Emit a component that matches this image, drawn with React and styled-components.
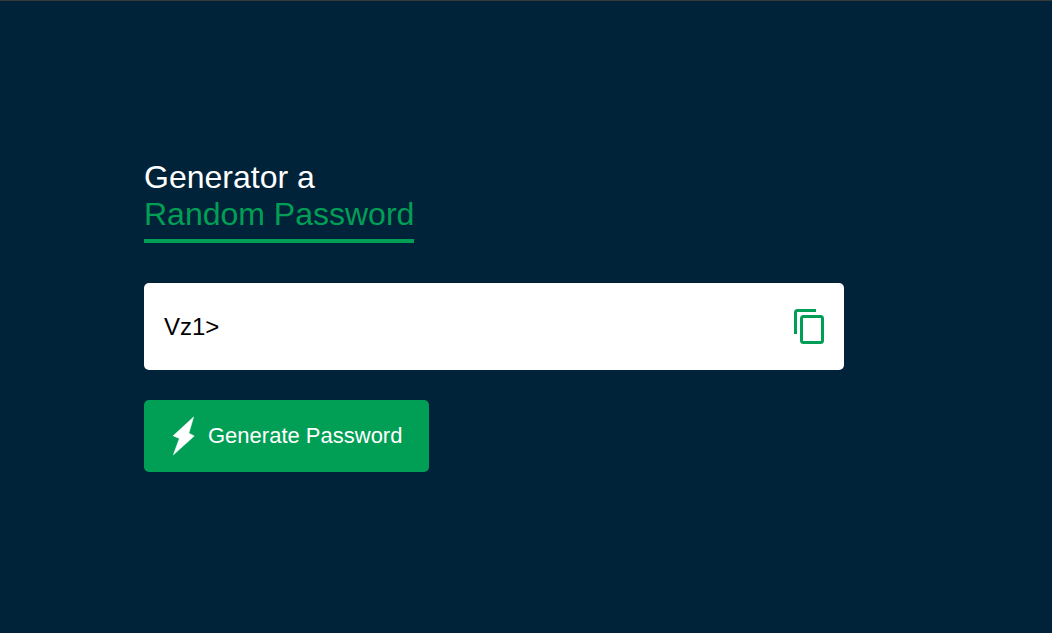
import React, { useState } from "react";
import styled, { createGlobalStyle } from "styled-components";

const GlobalStyle = createGlobalStyle`
  *, *::before, *::after { box-sizing: border-box; }
  body {
    margin: 0;
    background: #002339;
    font-family: "Liberation Sans", Arial, sans-serif;
  }
`;

const Page = styled.main`
  min-height: 100vh;
  display: flex;
  flex-direction: column;
  justify-content: center;
  padding: 0 20px 3px 144px;
  border-top: 1px solid #353a38;
`;

const Title = styled.h1`
  margin: 0 0 40px;
  font-size: 32px;
  line-height: 37px;
  font-weight: 400;
  color: #fff;
`;

const Accent = styled.span`
  display: block;
  width: fit-content;
  padding-bottom: 6px;
  border-bottom: 4px solid #019f55;
  color: #019f55;
`;

const Display = styled.div`
  display: flex;
  align-items: center;
  justify-content: space-between;
  width: 100%;
  max-width: 700px;
  height: 87px;
  margin-bottom: 30px;
  padding: 0 18px 0 20px;
  border-radius: 5px;
  background: #fff;
`;

const PasswordInput = styled.input`
  flex: 1;
  min-width: 0;
  padding: 0;
  border: 0;
  outline: 0;
  background: transparent;
  color: #000;
  font: 24px/30px "Liberation Sans", Arial, sans-serif;
`;

const CopyButton = styled.button`
  display: flex;
  padding: 0;
  border: 0;
  background: transparent;
  color: #019f55;
  cursor: pointer;
`;

const GenerateButton = styled.button`
  display: flex;
  align-items: center;
  align-self: flex-start;
  gap: 13px;
  height: 72px;
  padding: 0 27px 0 28px;
  border: 0;
  border-radius: 5px;
  background: #019f55;
  color: #fff;
  font: 22px/26px "Liberation Sans", Arial, sans-serif;
  cursor: pointer;
`;

const CHARS = "ABCDEFGHIJKLMNOPQRSTUVWXYZabcdefghijklmnopqrstuvwxyz0123456789!@#$%^&*()<>";

const CopyIcon = () => (
  <svg width="34" height="37" viewBox="0 0 34 37" fill="none" stroke="currentColor" strokeWidth="3" aria-hidden="true">
    <path d="M3.5 26V4.5Q3.5 2.5 5.5 2.5H24" />
    <rect x="9.5" y="8.5" width="21" height="26" rx="2" />
  </svg>
);

const BoltIcon = () => (
  <svg width="23" height="40" viewBox="0 0 23 40" fill="currentColor" stroke="currentColor" strokeWidth="0.6" strokeLinejoin="round" aria-hidden="true">
    <path d="M21.6 1L1.2 19.8L7.4 22.4L1.4 38.8L22.2 20L16.8 17.2Z" />
  </svg>
);

export default function App() {
  const [password, setPassword] = useState("Vz1>");
  const generate = () =>
    setPassword(Array.from({ length: 12 }, () => CHARS[Math.floor(Math.random() * CHARS.length)]).join(""));

  return (
    <>
      <GlobalStyle />
      <Page>
        <Title>
          Generator a <Accent>Random Password</Accent>
        </Title>
        <Display>
          <PasswordInput aria-label="Password" value={password} readOnly />
          <CopyButton type="button" aria-label="Copy password" onClick={() => navigator.clipboard?.writeText(password)}>
            <CopyIcon />
          </CopyButton>
        </Display>
        <GenerateButton type="button" onClick={generate}>
          <BoltIcon />
          Generate Password
        </GenerateButton>
      </Page>
    </>
  );
}
